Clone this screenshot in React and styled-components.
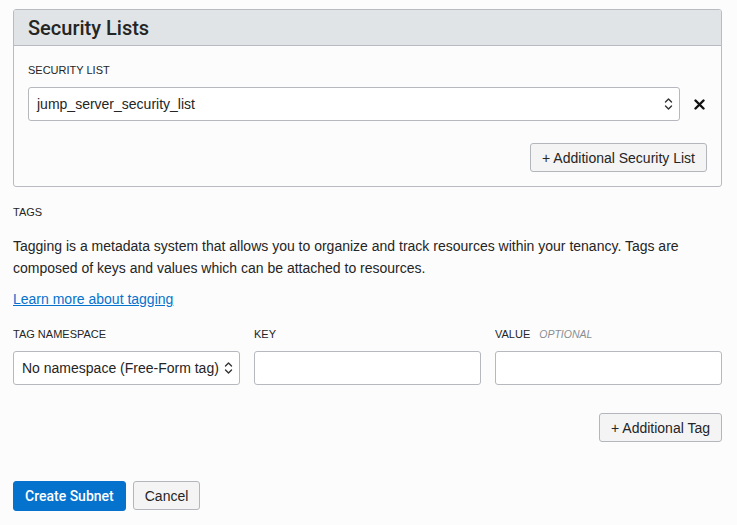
import React from "react";
import styled, { createGlobalStyle } from "styled-components";

const GlobalStyle = createGlobalStyle`
  body {
    margin: 0;
    background: #fcfcfc;
    font-family: "Liberation Sans", Arial, sans-serif;
    color: #252525;
  }
`;

const Page = styled.div`
  width: 709px;
  padding: 9px 0 0 13px;
`;

const Panel = styled.section`
  border: 1px solid #b8bcc1;
  border-radius: 3px;
  background: #fcfcfc;
  overflow: hidden;
`;

const PanelHeader = styled.h2`
  margin: 0;
  height: 35px;
  padding: 0 14px;
  display: flex;
  align-items: center;
  background: #e1e4e7;
  border-bottom: 1px solid #b8bcc1;
  font-family: Roboto, "Liberation Sans", sans-serif;
  font-size: 20px;
  font-weight: 500;
  color: #252525;
`;

const PanelBody = styled.div`
  padding: 17px 14px 14px;
`;

const FieldLabel = styled.div`
  font-size: 11px;
  line-height: 14px;
  text-transform: uppercase;
  color: #252525;
  margin-bottom: ${(p) => p.$gap ?? 10}px;
  white-space: nowrap;
`;

const Optional = styled.span`
  font-style: italic;
  color: #8a8e93;
  margin-left: 9px;
  font-size: 10.5px;
`;

const SelectRow = styled.div`
  display: flex;
  align-items: center;
  gap: 14px;
`;

const Box = styled.div`
  box-sizing: border-box;
  flex: 1;
  height: 34px;
  display: flex;
  align-items: center;
  justify-content: space-between;
  padding: 0 6px 0 8px;
  background: #fff;
  border: 1px solid #b5b9be;
  border-radius: 3px;
  font-size: 14px;
  color: #252525;
  white-space: nowrap;
  overflow: hidden;
`;

const RemoveButton = styled.button`
  border: 0;
  background: none;
  padding: 0 2px 0 0;
  display: flex;
  color: #111;
`;

const ButtonRow = styled.div`
  display: flex;
  justify-content: ${(p) => p.$align || "flex-end"};
  gap: 7px;
  margin-top: ${(p) => p.$top || 0}px;
`;

const Button = styled.button`
  box-sizing: border-box;
  height: ${(p) => (p.$primary ? 30 : 29)}px;
  padding: 0 11px;
  font-family: ${(p) => (p.$primary ? "Roboto, " : "")}"Liberation Sans", sans-serif;
  font-size: 14px;
  border-radius: 3px;
  border: 1px solid ${(p) => (p.$primary ? "#0572ce" : "#b3b7bc")};
  background: ${(p) => (p.$primary ? "#0572ce" : "#f4f4f4")};
  color: ${(p) => (p.$primary ? "#fff" : "#252525")};
  font-weight: ${(p) => (p.$primary ? 500 : 400)};
`;

const Section = styled.div`
  padding-top: 18px;
`;

const Text = styled.p`
  margin: 16px 0 0;
  font-size: 14px;
  line-height: 22px;
  color: #252525;
`;

const Link = styled.a`
  display: inline-block;
  margin-top: 11px;
  font-size: 14px;
  line-height: 18px;
  color: #0572ce;
  text-decoration: underline;
`;

const TagGrid = styled.div`
  display: grid;
  grid-template-columns: repeat(3, 1fr);
  column-gap: 14px;
  margin-top: 19px;
`;

const Chevron = () => (
  <svg width="9" height="14" viewBox="0 0 9 14" fill="none" stroke="#333" strokeWidth="1.4" strokeLinecap="round" strokeLinejoin="round">
    <path d="M1.5 5 L4.5 2 L7.5 5" />
    <path d="M1.5 9 L4.5 12 L7.5 9" />
  </svg>
);

const Cross = () => (
  <svg width="11" height="11" viewBox="0 0 11 11" stroke="#111" strokeWidth="2.4" strokeLinecap="round">
    <path d="M1.5 1.5 L9.5 9.5 M9.5 1.5 L1.5 9.5" />
  </svg>
);

export default function App() {
  return (
    <Page>
      <GlobalStyle />
      <Panel>
        <PanelHeader>Security Lists</PanelHeader>
        <PanelBody>
          <FieldLabel $gap={10}>Security List</FieldLabel>
          <SelectRow>
            <Box>
              jump_server_security_list
              <Chevron />
            </Box>
            <RemoveButton aria-label="Remove">
              <Cross />
            </RemoveButton>
          </SelectRow>
          <ButtonRow $top={22}>
            <Button>+ Additional Security List</Button>
          </ButtonRow>
        </PanelBody>
      </Panel>

      <Section>
        <FieldLabel $gap={0}>Tags</FieldLabel>
        <Text>
          Tagging is a metadata system that allows you to organize and track resources within your tenancy. Tags are
          composed of keys and values which can be attached to resources.
        </Text>
        <Link href="#">Learn more about tagging</Link>
        <TagGrid>
          <div>
            <FieldLabel $gap={10}>Tag Namespace</FieldLabel>
            <Box>
              No namespace (Free-Form tag)
              <Chevron />
            </Box>
          </div>
          <div>
            <FieldLabel $gap={10}>Key</FieldLabel>
            <Box />
          </div>
          <div>
            <FieldLabel $gap={10}>
              Value<Optional>Optional</Optional>
            </FieldLabel>
            <Box />
          </div>
        </TagGrid>
        <ButtonRow $top={28}>
          <Button>+ Additional Tag</Button>
        </ButtonRow>
        <ButtonRow $align="flex-start" $top={39}>
          <Button $primary>Create Subnet</Button>
          <Button>Cancel</Button>
        </ButtonRow>
      </Section>
    </Page>
  );
}
